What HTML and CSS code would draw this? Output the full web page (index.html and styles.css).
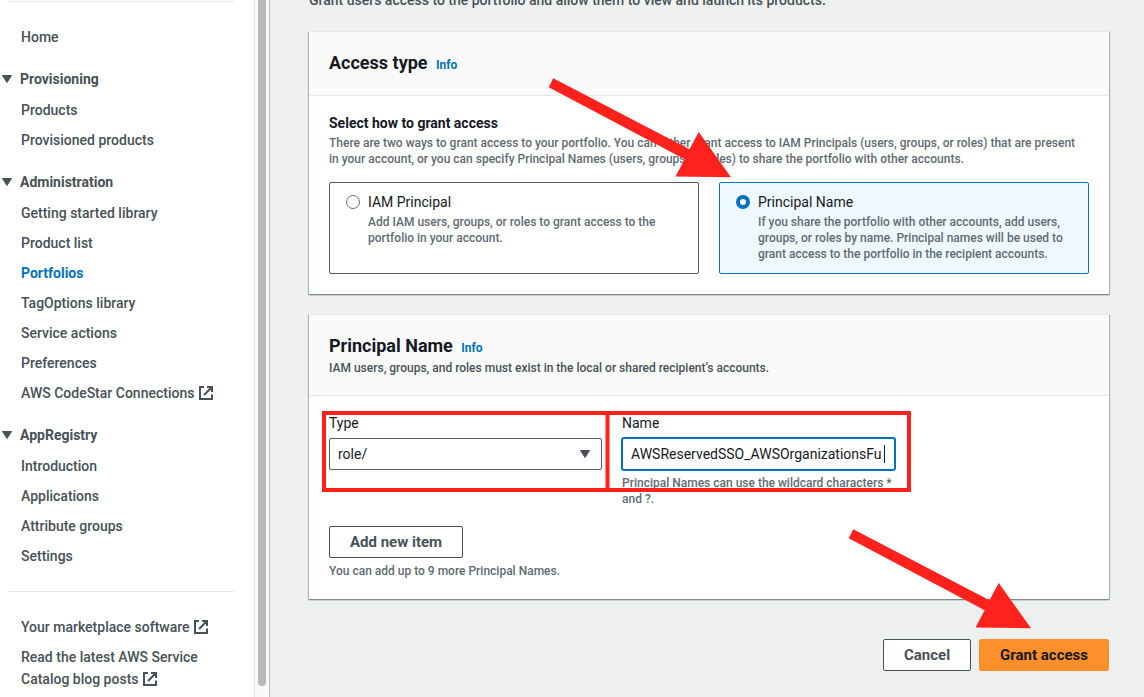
FILE: index.html
```
<!DOCTYPE html>
<html lang="en">
<head>
<meta charset="utf-8">
<title>Grant access - Service Catalog</title>
<link rel="stylesheet" href="styles.css">
</head>
<body>
<svg class="defs" width="0" height="0" aria-hidden="true">
  <symbol id="external" viewBox="0 0 16 16">
    <path d="M6 2H2v12h12V9.500M9 2h5v5M14 2L6 10" fill="none" stroke="currentColor" stroke-width="2"/>
  </symbol>
  <symbol id="caret" viewBox="0 0 10 8"><path d="M.5.5h9L5 7.500z" fill="currentColor" stroke="currentColor" stroke-linejoin="round"/></symbol>
</svg>

<div class="layout">
  <aside class="sidebar">
    <nav class="nav" aria-label="Service Catalog">
      <hr class="divider">
      <ul class="list">
        <li><a href="#home">Home</a></li>
      </ul>
      <button class="section" type="button" aria-expanded="true"><svg class="caret"><use href="#caret"/></svg>Provisioning</button>
      <ul class="list">
        <li><a href="#products">Products</a></li>
        <li><a href="#provisioned">Provisioned products</a></li>
      </ul>
      <button class="section" type="button" aria-expanded="true"><svg class="caret"><use href="#caret"/></svg>Administration</button>
      <ul class="list">
        <li><a href="#library">Getting started library</a></li>
        <li><a href="#product-list">Product list</a></li>
        <li><a class="active" href="#portfolios" aria-current="page">Portfolios</a></li>
        <li><a href="#tagoptions">TagOptions library</a></li>
        <li><a href="#actions">Service actions</a></li>
        <li><a href="#preferences">Preferences</a></li>
        <li><a href="#codestar">AWS CodeStar Connections <svg class="external"><use href="#external"/></svg></a></li>
      </ul>
      <button class="section" type="button" aria-expanded="true"><svg class="caret"><use href="#caret"/></svg>AppRegistry</button>
      <ul class="list">
        <li><a href="#introduction">Introduction</a></li>
        <li><a href="#applications">Applications</a></li>
        <li><a href="#attributes">Attribute groups</a></li>
        <li><a href="#settings">Settings</a></li>
      </ul>
      <hr class="divider">
      <ul class="list">
        <li><a href="#marketplace">Your marketplace software <svg class="external"><use href="#external"/></svg></a></li>
        <li><a href="#blog">Read the latest AWS Service Catalog blog posts <svg class="external"><use href="#external"/></svg></a></li>
      </ul>
    </nav>
    <div class="track"><div class="thumb"></div></div>
  </aside>

  <main class="main">
    <p class="intro">Grant users access to the portfolio and allow them to view and launch its products.</p>

    <section class="panel">
      <header class="panel-head">
        <h2>Access type <a class="info" href="#info-access">Info</a></h2>
      </header>
      <fieldset class="panel-body">
        <legend class="legend">Select how to grant access</legend>
        <p class="hint lead">There are two ways to grant access to your portfolio. You can either grant access to IAM Principals (users, groups, or roles) that are present in your account, or you can specify Principal Names (users, groups, or roles) to share the portfolio with other accounts.</p>
        <div class="tiles">
          <label class="tile">
            <input type="radio" name="access">
            <span class="tile-text">
              <span class="tile-title">IAM Principal</span>
              <span class="hint">Add IAM users, groups, or roles to grant access to the portfolio in your account.</span>
            </span>
          </label>
          <label class="tile selected">
            <input type="radio" name="access" checked>
            <span class="tile-text">
              <span class="tile-title">Principal Name</span>
              <span class="hint">If you share the portfolio with other accounts, add users, groups, or roles by name. Principal names will be used to grant access to the portfolio in the recipient accounts.</span>
            </span>
          </label>
        </div>
      </fieldset>
    </section>

    <section class="panel">
      <header class="panel-head">
        <h2>Principal Name <a class="info" href="#info-name">Info</a></h2>
        <p class="hint dark">IAM users, groups, and roles must exist in the local or shared recipient’s accounts.</p>
      </header>
      <div class="panel-body form">
        <div class="fields">
          <div class="field">
            <label for="type">Type</label>
            <div class="control">
              <select id="type"><option>role/</option></select>
              <svg class="caret"><use href="#caret"/></svg>
            </div>
          </div>
          <div class="field">
            <label for="name">Name</label>
            <div class="control">
              <input id="name" class="focused" type="text" value="AWSReservedSSO_AWSOrganizationsFu">
              <span class="cursor"></span>
            </div>
            <p class="hint">Principal Names can use the wildcard characters * and ?.</p>
          </div>
        </div>
        <button class="button" type="button">Add new item</button>
        <p class="hint">You can add up to 9 more Principal Names.</p>
      </div>
    </section>

    <div class="actions">
      <button class="button" type="button">Cancel</button>
      <button class="button primary" type="submit">Grant access</button>
    </div>
  </main>

  <svg class="annotations" width="1144" height="697" viewBox="0 0 1144 697" aria-hidden="true">
    <defs><path id="arrow" d="M548.700 87.300L553.300 78.300L689.500 149.300L698.700 132L731 177.300L675.500 176.500L684.700 159.300Z"/></defs>
    <use href="#arrow"/>
    <use href="#arrow" x="300" y="451"/>
    <path class="frame" d="M324 413H607.500V490H324ZM607.500 413H909V490H607.500Z"/>
  </svg>
</div>
</body>
</html>
```
FILE: styles.css
```
* {
  box-sizing: border-box;
}

body {
  margin: 0;
  background: #eff1f1;
  color: #16191f;
  font: 14px/22px Roboto, "Liberation Sans", sans-serif;
}

p, h2, ul, fieldset {
  margin: 0;
  padding: 0;
  border: 0;
}

a {
  color: inherit;
  text-decoration: none;
}

button, input, select {
  font: inherit;
  color: inherit;
}

.defs {
  display: block;
}

.layout {
  position: relative;
  display: flex;
  height: 100vh;
  overflow: hidden;
}

/* Sidebar */

.sidebar {
  flex: none;
  display: flex;
  width: 270px;
  background: #fff;
  border-right: 1px solid #b9c0c4;
  color: #485157;
  font-weight: 500;
}

.nav {
  flex: 1;
  padding-top: 1px;
}

.divider {
  height: 1px;
  margin: 20px 20px 20px 9px;
  border: 0;
  background: #e6e8e8;
}

.divider:first-child {
  margin-top: 0;
}

.list {
  padding-left: 21px;
  list-style: none;
}

.list a {
  display: block;
  max-width: 200px;
  padding: 4px 0;
}

.list .active {
  color: #0073bb;
  font-weight: 700;
}

.section {
  display: flex;
  align-items: center;
  gap: 8px;
  margin: 16px 0 5px;
  padding: 0 0 0 2px;
  border: 0;
  background: none;
  font-weight: 700;
}

.caret {
  width: 10px;
  height: 8px;
  color: #485157;
}

.external {
  width: 16px;
  height: 16px;
  vertical-align: -3px;
}

.track {
  width: 15px;
  padding: 0 3px;
  background: #fafafa;
  border-left: 1px solid #e4e5e6;
}

.thumb {
  width: 8px;
  height: calc(100% - 11px);
  border-radius: 0 0 4px 4px;
  background: #b9b9b9;
}

/* Main column */

.main {
  flex: 1;
  min-width: 0;
  padding: 0 35px 26px 39px;
}

.intro {
  margin: -11px 0 20px;
  color: #485157;
  font-weight: 500;
}

.panel {
  margin-bottom: 20px;
  background: #fff;
  border-top: 1px solid #e6e8e8;
  box-shadow: 0 1px 1px #7f898d, 1px 1px 1px #b4bcc0, -1px 1px 1px #b4bcc0;
}

.panel-head {
  min-height: 64px;
  padding: 20px 20px 19px;
  background: #fafafa;
  border-bottom: 1px solid #e6e8e8;
}

h2 {
  font-size: 18px;
  line-height: 22px;
  font-weight: 700;
}

.info {
  margin-left: 4px;
  color: #0073bb;
  font-size: 12px;
  line-height: 16px;
}

.panel-body {
  padding: 16px 20px 20px;
}

.legend {
  float: left;
  width: 100%;
  margin-bottom: 1px;
  padding: 0;
  font-weight: 700;
}

.hint {
  display: block;
  clear: both;
  color: #5f6b73;
  font-size: 12px;
  line-height: 16px;
  font-weight: 500;
}

.lead {
  padding-right: 8px;
}

.panel-head .hint {
  margin-top: 3px;
}

.panel-head .dark {
  color: #485157;
}

.tiles {
  display: grid;
  grid-template-columns: 1fr 1fr;
  gap: 20px;
  margin-top: 15px;
}

.tile {
  display: flex;
  gap: 8px;
  min-height: 92px;
  padding: 8px 16px;
  border: 1px solid #545b64;
  border-radius: 2px;
}

.tile.selected {
  border-color: #0073bb;
  background: #edf9ff;
}

.tile-title {
  display: block;
  margin-bottom: 1px;
}

.tile input {
  flex: none;
  appearance: none;
  width: 14px;
  height: 14px;
  margin: 4px 0;
  border: 1px solid #687078;
  border-radius: 50%;
  background: #fff;
}

.tile input:checked {
  border: 4px solid #0073bb;
}

/* Principal form */

.fields {
  display: grid;
  grid-template-columns: 273fr 273fr 174fr;
  gap: 20px;
  margin-bottom: 19px;
}

.control {
  position: relative;
  margin: 4px 0 5px;
}

.control select,
.control input {
  display: block;
  appearance: none;
  width: 100%;
  height: 32px;
  padding: 0 8px;
  border: 1px solid #545b64;
  border-radius: 2px;
  background: #fff;
  outline: 0;
}

.control .focused {
  border-color: #0073bb;
  box-shadow: 0 0 0 1px #0073bb;
}

.control .caret {
  position: absolute;
  top: 12px;
  right: 12px;
}

.cursor {
  position: absolute;
  top: 7px;
  right: 10px;
  width: 1px;
  height: 18px;
  background: #16191f;
}

.form .button {
  margin-bottom: 5px;
}

.button {
  height: 32px;
  padding: 0 20px;
  border: 1px solid #485157;
  border-radius: 2px;
  background: #fff;
  color: #485157;
  font-size: 15px;
  font-weight: 700;
}

.button.primary {
  border-color: #ff8f2b;
  background: #ff8f2b;
  color: #16191f;
}

.actions {
  display: flex;
  justify-content: flex-end;
  gap: 8px;
  padding-top: 20px;
}

/* Callouts drawn over the page */

.annotations {
  position: absolute;
  top: 0;
  left: 0;
  fill: #ff221c;
  pointer-events: none;
}

.frame {
  fill: none;
  stroke: #ff221c;
  stroke-width: 4;
}
```
